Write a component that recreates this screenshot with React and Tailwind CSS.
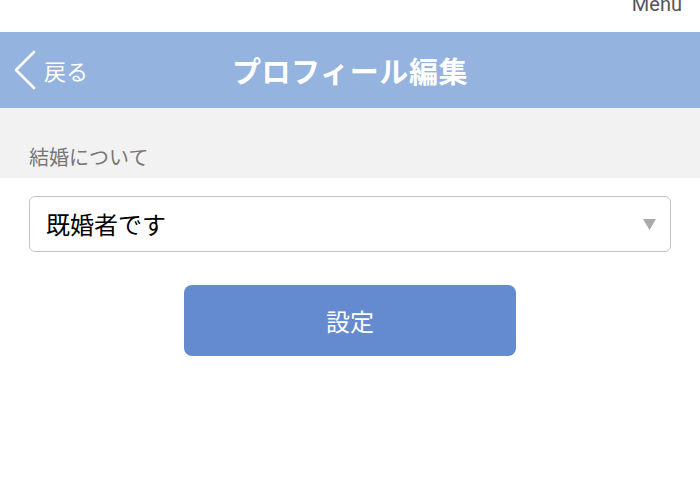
import { useState } from "react";

const font = { fontFamily: '"Noto Sans CJK JP", "Noto Sans", sans-serif' };

export default function App() {
  const [value, setValue] = useState("married");

  return (
    <div className="min-h-[477px] bg-white" style={font}>
      <div className="h-[32px] overflow-hidden flex justify-end pr-[18px]">
        <span className="text-[20px] leading-none text-[#555] -mt-[6px]" style={{ fontFamily: '"Roboto", sans-serif' }}>
          Menu
        </span>
      </div>

      <header className="relative h-[76px] bg-[#95b3df] flex items-center justify-center">
        <button className="absolute left-[13px] top-0 h-full flex items-center gap-[7px] text-white">
          <svg width="24" height="40" viewBox="0 0 24 40" fill="none">
            <path d="M21 2 L3 20 L21 38" stroke="white" strokeWidth="2.6" strokeLinecap="round" strokeLinejoin="round" />
          </svg>
          <span className="text-[22px] leading-none">戻る</span>
        </button>
        <h1 className="text-[29px] font-bold text-white leading-none tracking-[0.6px]">プロフィール編集</h1>
      </header>

      <div className="h-[70px] bg-[#f2f2f2] flex items-end pl-[29px] pb-[11px]">
        <span className="text-[20px] text-[#777] leading-none">結婚について</span>
      </div>

      <div className="px-[29px] pt-[18px]">
        <div className="relative">
          <select
            value={value}
            onChange={(e) => setValue(e.target.value)}
            className="appearance-none w-full h-[56px] rounded-[6px] border border-[#c4c4c4] bg-white pl-[16px] text-[24px] text-black outline-none"
            style={font}
          >
            <option value="single">未婚です</option>
            <option value="married">既婚者です</option>
          </select>
          <svg className="absolute right-[15px] top-[23px] pointer-events-none" width="13" height="11" viewBox="0 0 13 11">
            <path d="M0 0 H13 L6.5 11 Z" fill="#aaaaaa" />
          </svg>
        </div>
      </div>

      <div className="flex justify-center pt-[33px]">
        <button className="w-[332px] h-[71px] rounded-[8px] bg-[#648bcf] text-white text-[24px]">設定</button>
      </div>
    </div>
  );
}
